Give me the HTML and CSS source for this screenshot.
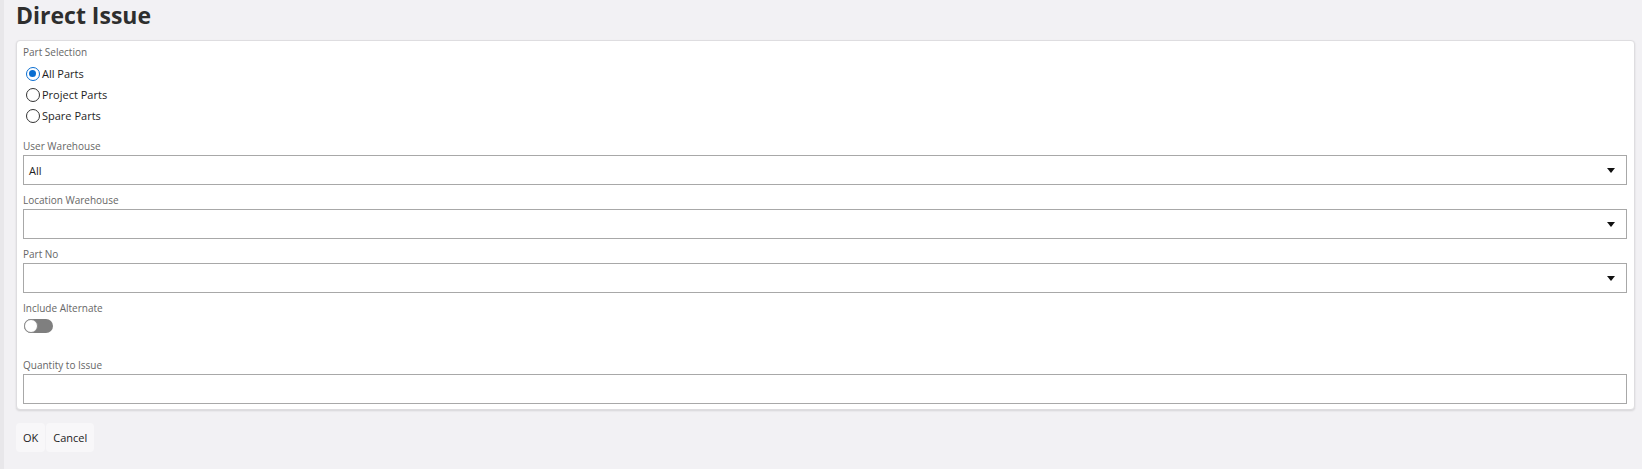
FILE: index.html
```html
<!DOCTYPE html>
<html lang="en">
<head>
<meta charset="utf-8">
<title>Direct Issue</title>
<link rel="stylesheet" href="styles.css">
</head>
<body>
<div class="page">
  <h1 class="title">Direct Issue</h1>
  <div class="card">
    <div class="field">
      <div class="label">Part Selection</div>
      <div class="radios">
        <label class="radio-row"><span class="radio checked"></span><span>All Parts</span></label>
        <label class="radio-row"><span class="radio"></span><span>Project Parts</span></label>
        <label class="radio-row"><span class="radio"></span><span>Spare Parts</span></label>
      </div>
    </div>
    <div class="field field-first">
      <div class="label">User Warehouse</div>
      <div class="input select"><span class="value">All</span><span class="arrow"></span></div>
    </div>
    <div class="field">
      <div class="label">Location Warehouse</div>
      <div class="input select"><span class="value"></span><span class="arrow"></span></div>
    </div>
    <div class="field">
      <div class="label">Part No</div>
      <div class="input select"><span class="value"></span><span class="arrow"></span></div>
    </div>
    <div class="field">
      <div class="label">Include Alternate</div>
      <div class="toggle"><span class="knob"></span></div>
    </div>
    <div class="field field-qty">
      <div class="label">Quantity to Issue</div>
      <div class="input"></div>
    </div>
  </div>
  <div class="actions">
    <button class="btn">OK</button>
    <button class="btn">Cancel</button>
  </div>
</div>
</body>
</html>
```
FILE: styles.css
```css
* { box-sizing: border-box; }
html, body {
  margin: 0;
  padding: 0;
  background: #f2f1f4;
  font-family: "Open Sans", "Liberation Sans", sans-serif;
  color: #333;
}
.page {
  min-height: 469px;
  border-left: 4px solid #e8e7ea;
  padding: 0 7px 0 12px;
}
.title {
  margin: 0 0 10px 0;
  font-size: 23px;
  line-height: 30px;
  font-weight: 700;
  color: #2e2e2e;
}
.card {
  background: #fff;
  border: 1px solid #dedde0;
  border-radius: 4px;
  box-shadow: 0 1px 2px rgba(0,0,0,0.12);
  padding: 3px 7px 5px 6px;
  display: flex;
  flex-direction: column;
  gap: 7px;
}
.field { display: flex; flex-direction: column; }
.field-first { margin-top: 5px; }
.field-qty { margin-top: 17px; }
.label {
  font-size: 10px;
  line-height: 16px;
  color: #666;
  margin-bottom: 1px;
}
.radios {
  display: flex;
  flex-direction: column;
  margin-top: 2px;
}
.radio-row {
  display: flex;
  align-items: center;
  height: 21px;
  font-size: 11px;
  color: #1e1e1e;
}
.radio {
  width: 14px;
  height: 14px;
  border: 1px solid #333;
  border-radius: 50%;
  margin: 0 2px 0 3px;
  background: #fff;
  position: relative;
}
.radio.checked {
  border: 1.5px solid #0a6ed1;
}
.radio.checked::after {
  content: "";
  position: absolute;
  left: 2px; top: 2px;
  width: 7px; height: 7px;
  border-radius: 50%;
  background: #0a6ed1;
}
.input {
  height: 30px;
  border: 1px solid #a8a8a8;
  background: #fff;
  display: flex;
  align-items: center;
  padding: 0 11px 0 5px;
  font-size: 11px;
  color: #222;
}
.select .value { flex: 1; }
.arrow {
  width: 0; height: 0;
  border-left: 4.5px solid transparent;
  border-right: 4.5px solid transparent;
  border-top: 5px solid #111;
  margin-top: 1px;
}
.toggle {
  width: 29px;
  height: 14px;
  border-radius: 7px;
  background: #7f7f7f;
  margin: 2px 0 0 1px;
  position: relative;
}
.knob {
  position: absolute;
  left: 0; top: 0;
  width: 14px; height: 14px;
  border-radius: 50%;
  background: #fff;
  border: 1px solid #8a8a8a;
}
.actions {
  display: flex;
  gap: 1px;
  margin-top: 13px;
}
.btn {
  font-family: "Open Sans", "Liberation Sans", sans-serif;
  font-size: 11px;
  color: #222;
  background: #f8f7f9;
  border: none;
  border-radius: 4px;
  height: 29px;
  padding: 0 7px;
}
```
